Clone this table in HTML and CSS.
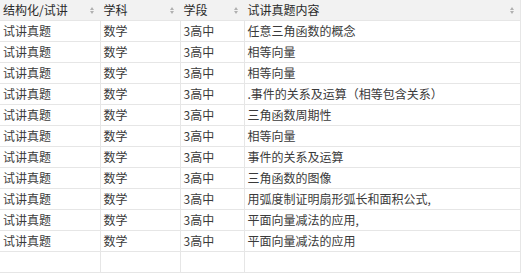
FILE: index.html
```html
<!DOCTYPE html>
<html lang="zh">
<head>
<meta charset="utf-8">
<link rel="stylesheet" href="styles.css">
</head>
<body>
<table class="grid">
  <colgroup>
    <col class="c1"><col class="c2"><col class="c3"><col class="c4">
  </colgroup>
  <thead>
    <tr>
      <th><div class="hd"><span>结构化/试讲</span><i class="sort"></i></div></th>
      <th><div class="hd"><span>学科</span><i class="sort"></i></div></th>
      <th><div class="hd"><span>学段</span><i class="sort"></i></div></th>
      <th><div class="hd"><span>试讲真题内容</span><i class="sort"></i></div></th>
    </tr>
  </thead>
  <tbody>
    <tr><td>试讲真题</td><td>数学</td><td>3高中</td><td>任意三角函数的概念</td></tr>
    <tr><td>试讲真题</td><td>数学</td><td>3高中</td><td>相等向量</td></tr>
    <tr><td>试讲真题</td><td>数学</td><td>3高中</td><td>相等向量</td></tr>
    <tr><td>试讲真题</td><td>数学</td><td>3高中</td><td>.事件的关系及运算（相等包含关系）</td></tr>
    <tr><td>试讲真题</td><td>数学</td><td>3高中</td><td>三角函数周期性</td></tr>
    <tr><td>试讲真题</td><td>数学</td><td>3高中</td><td>相等向量</td></tr>
    <tr><td>试讲真题</td><td>数学</td><td>3高中</td><td>事件的关系及运算</td></tr>
    <tr><td>试讲真题</td><td>数学</td><td>3高中</td><td>三角函数的图像</td></tr>
    <tr><td>试讲真题</td><td>数学</td><td>3高中</td><td>用弧度制证明扇形弧长和面积公式,</td></tr>
    <tr><td>试讲真题</td><td>数学</td><td>3高中</td><td>平面向量减法的应用,</td></tr>
    <tr><td>试讲真题</td><td>数学</td><td>3高中</td><td>平面向量减法的应用</td></tr>
    <tr><td></td><td></td><td></td><td></td></tr>
  </tbody>
</table>
</body>
</html>
```

FILE: styles.css
```css
html, body {
  margin: 0;
  padding: 0;
  background: #ffffff;
}
body {
  font-family: "Noto Sans CJK SC", "Noto Sans", sans-serif;
  font-size: 12px;
  color: #3a3a3a;
}
.grid {
  border-collapse: collapse;
  table-layout: fixed;
  width: 520px;
}
.c1 { width: 100px; }
.c2 { width: 80px; }
.c3 { width: 64px; }
.c4 { width: 276px; }
.grid th {
  background: #f2f2f2;
  height: 20px;
  padding: 0 0 0 3px;
  font-weight: normal;
  text-align: left;
  color: #2a2a2a;
  border-bottom: 1px solid #e6e6e6;
  border-right: 1px solid #f2f2f2;
}
.grid th:last-child {
  border-right: 1px solid #e6e6e6;
}
.hd {
  display: flex;
  align-items: center;
  justify-content: space-between;
  padding-right: 5px;
  line-height: 20px;
}
.sort {
  display: flex;
  flex-direction: column;
  gap: 1px;
  width: 5px;
}
.sort::before, .sort::after {
  content: "";
  display: block;
  width: 0;
  height: 0;
  border-left: 2.5px solid transparent;
  border-right: 2.5px solid transparent;
}
.sort::before { border-bottom: 3px solid #b0b0b0; }
.sort::after { border-top: 3px solid #b0b0b0; }
.grid td {
  height: 20px;
  padding: 0 0 0 3px;
  line-height: 20px;
  white-space: nowrap;
  overflow: hidden;
  border-right: 1px solid #e6e6e6;
  border-bottom: 1px solid #e6e6e6;
}
```
